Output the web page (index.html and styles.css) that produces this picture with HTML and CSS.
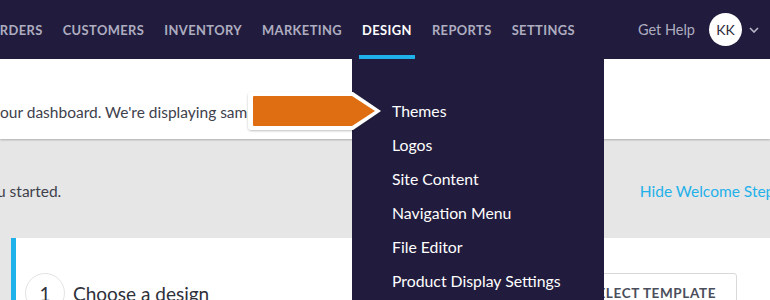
FILE: index.html
```html
<!DOCTYPE html>
<html>
<head>
<meta charset="utf-8">
<link rel="stylesheet" href="styles.css">
</head>
<body>
<div class="page">
  <header class="topbar">
    <nav class="nav">
      <a class="nav-item">ORDERS</a>
      <a class="nav-item">CUSTOMERS</a>
      <a class="nav-item">INVENTORY</a>
      <a class="nav-item">MARKETING</a>
      <a class="nav-item active">DESIGN</a>
      <a class="nav-item">REPORTS</a>
      <a class="nav-item">SETTINGS</a>
    </nav>
    <div class="account">
      <span class="help">Get Help</span>
      <span class="avatar">KK</span>
      <svg class="chev" width="10" height="6" viewBox="0 0 10 6"><path d="M1 1 L5 5 L9 1" fill="none" stroke="#b9b8c9" stroke-width="1.6"/></svg>
    </div>
  </header>

  <section class="banner">
    <p class="banner-text">our dashboard. We're displaying sample data until you add your own.</p>
  </section>

  <section class="welcome">
    <div class="welcome-head">
      <p class="welcome-text">u started.</p>
      <a class="hide-link">Hide Welcome Steps</a>
    </div>
    <div class="card">
      <div class="step">
        <span class="step-num">1</span>
        <span class="step-title">Choose a design</span>
        <span class="step-btn">SELECT TEMPLATE</span>
      </div>
    </div>
  </section>

  <div class="dropdown">
    <a class="dd-item">Themes</a>
    <a class="dd-item">Logos</a>
    <a class="dd-item">Site Content</a>
    <a class="dd-item">Navigation Menu</a>
    <a class="dd-item">File Editor</a>
    <a class="dd-item">Product Display Settings</a>
  </div>

  <svg class="callout" width="141" height="44" viewBox="0 0 141 44">
    <defs>
      <filter id="sh" x="-10%" y="-20%" width="120%" height="150%">
        <feDropShadow dx="0" dy="1" stdDeviation="1.2" flood-color="#000" flood-opacity="0.25"/>
      </filter>
    </defs>
    <path d="M7 2 H108 L136 21 L108 40 H7 Q3 40 3 36 V6 Q3 2 7 2 Z" fill="#ffffff" filter="url(#sh)"/>
    <path d="M9 6 H107 L130 21 L107 36 H9 Q8 36 8 35 V7 Q8 6 9 6 Z" fill="#df6e12"/>
  </svg>
</div>
</body>
</html>
```
FILE: styles.css
```css
* { box-sizing: border-box; }
html, body { margin: 0; padding: 0; }
body {
  font-family: Lato, "Liberation Sans", sans-serif;
  background: #e6e6e6;
  width: 770px;
  height: 300px;
  overflow: hidden;
}
.page {
  position: relative;
  width: 770px;
  height: 300px;
  overflow: hidden;
}
.topbar {
  height: 59px;
  background: #211c3d;
  display: flex;
  align-items: center;
  justify-content: space-between;
}
.nav {
  display: flex;
  align-items: center;
  gap: 20px;
  margin-left: -11px;
  height: 100%;
}
.nav-item {
  color: #aeadc0;
  font-size: 12.9px;
  font-weight: 700;
  letter-spacing: 0.4px;
  height: 100%;
  display: flex;
  align-items: center;
  padding-top: 1px;
}
.nav-item.active {
  color: #ffffff;
  position: relative;
}
.nav-item.active::after {
  content: "";
  position: absolute;
  left: -3px;
  right: -3px;
  bottom: 0;
  height: 4px;
  background: #1fb1e9;
}
.account {
  display: flex;
  align-items: center;
  margin-right: 11px;
}
.help {
  color: #aeadc0;
  font-size: 14.5px;
  margin-right: 14px;
}
.avatar {
  width: 33px;
  height: 33px;
  border-radius: 50%;
  background: #fff;
  color: #2b2a3a;
  font-size: 14px;
  display: flex;
  align-items: center;
  justify-content: center;
  margin-right: 7px;
}
.chev { display: block; }

.banner {
  height: 80px;
  background: #fff;
  box-shadow: 0 1px 2px rgba(0,0,0,0.25);
  display: flex;
  align-items: center;
  position: relative;
}
.banner-text {
  margin: 0;
  margin-top: 25px;
  font-size: 15.5px;
  color: #3e414c;
  white-space: nowrap;
}
.welcome {
  padding-top: 1px;
}
.welcome-head {
  height: 98px;
  display: flex;
  align-items: center;
  justify-content: space-between;
  padding-top: 3px;
}
.welcome-text {
  margin: 0;
  font-size: 15.5px;
  color: #3e414c;
  margin-left: -3px;
}
.hide-link {
  color: #1fb1e9;
  font-size: 15.5px;
  white-space: nowrap;
  margin-right: -11px;
}
.card {
  margin-left: 11px;
  background: #fff;
  border-left: 5px solid #1fb1e9;
  height: 100px;
  padding-top: 35px;
}
.step {
  display: flex;
  align-items: center;
  height: 40px;
  padding-left: 9px;
  padding-right: 33px;
}
.step-num {
  width: 40px;
  height: 40px;
  border-radius: 50%;
  border: 1px solid #e3e3e3;
  display: flex;
  align-items: center;
  justify-content: center;
  font-size: 19px;
  color: #2e303a;
}
.step-title {
  font-size: 19px;
  color: #2e303a;
  margin-left: 8px;
  flex: 1;
}
.step-btn {
  border: 1px solid #d9d9d9;
  border-radius: 3px;
  font-size: 13.5px;
  font-weight: 700;
  letter-spacing: 0.6px;
  color: #4a4e5b;
  padding: 0 20px;
  height: 40px;
  display: flex;
  align-items: center;
}

.dropdown {
  position: absolute;
  left: 352px;
  top: 59px;
  width: 252px;
  height: 260px;
  background: #211c3d;
  padding-top: 35px;
  padding-left: 40px;
  display: flex;
  flex-direction: column;
}
.dd-item {
  color: #ffffff;
  font-size: 15.8px;
  height: 34px;
  line-height: 34px;
  white-space: nowrap;
}
.callout {
  position: absolute;
  left: 245px;
  top: 90px;
}
```
